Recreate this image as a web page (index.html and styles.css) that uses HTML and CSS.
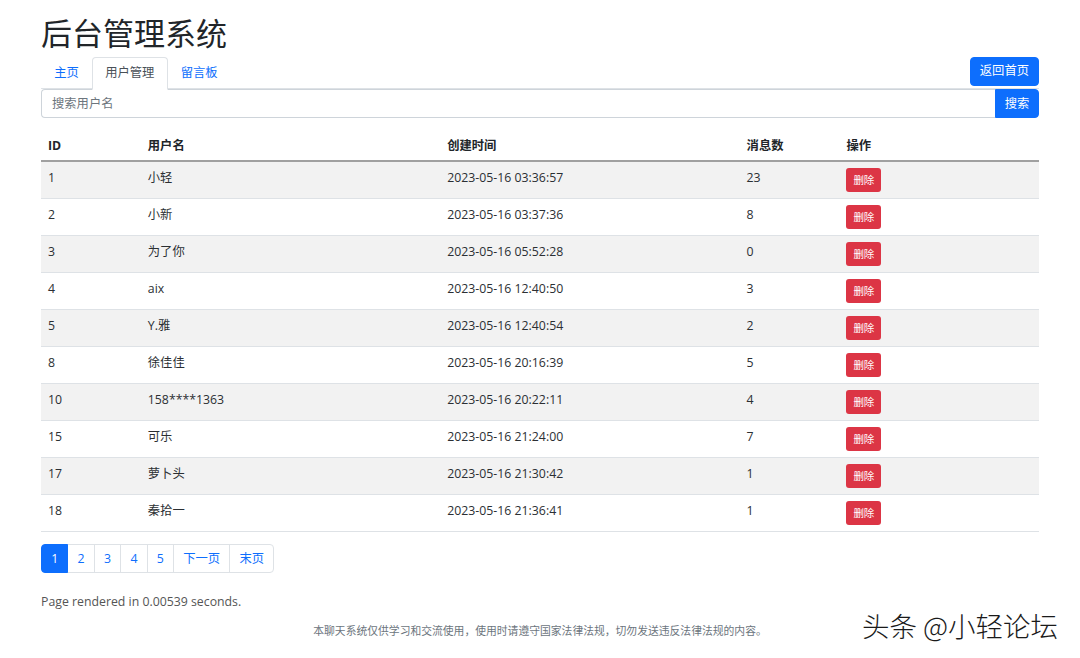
FILE: index.html
```html
<!DOCTYPE html>
<html lang="zh-CN">
<head>
<meta charset="utf-8">
<title>后台管理系统</title>
<link rel="stylesheet" href="styles.css">
</head>
<body>
<div class="container">
  <h1 class="title">后台管理系统</h1>
  <div class="nav-row">
    <ul class="nav-tabs">
      <li><a class="tab" href="#">主页</a></li>
      <li><a class="tab active" href="#">用户管理</a></li>
      <li><a class="tab" href="#">留言板</a></li>
    </ul>
    <a class="btn btn-home" href="#">返回首页</a>
  </div>
  <form class="search">
    <input class="search-input" type="text" placeholder="搜索用户名">
    <button class="btn btn-search" type="button">搜索</button>
  </form>
  <table class="table">
    <colgroup>
      <col class="c-id"><col class="c-name"><col class="c-time"><col class="c-count"><col class="c-op">
    </colgroup>
    <thead>
      <tr><th>ID</th><th>用户名</th><th>创建时间</th><th>消息数</th><th>操作</th></tr>
    </thead>
    <tbody>
      <tr><td>1</td><td>小轻</td><td>2023-05-16 03:36:57</td><td>23</td><td><button class="btn-del">删除</button></td></tr>
      <tr><td>2</td><td>小新</td><td>2023-05-16 03:37:36</td><td>8</td><td><button class="btn-del">删除</button></td></tr>
      <tr><td>3</td><td>为了你</td><td>2023-05-16 05:52:28</td><td>0</td><td><button class="btn-del">删除</button></td></tr>
      <tr><td>4</td><td>aix</td><td>2023-05-16 12:40:50</td><td>3</td><td><button class="btn-del">删除</button></td></tr>
      <tr><td>5</td><td>Y.雅</td><td>2023-05-16 12:40:54</td><td>2</td><td><button class="btn-del">删除</button></td></tr>
      <tr><td>8</td><td>徐佳佳</td><td>2023-05-16 20:16:39</td><td>5</td><td><button class="btn-del">删除</button></td></tr>
      <tr><td>10</td><td>158****1363</td><td>2023-05-16 20:22:11</td><td>4</td><td><button class="btn-del">删除</button></td></tr>
      <tr><td>15</td><td>可乐</td><td>2023-05-16 21:24:00</td><td>7</td><td><button class="btn-del">删除</button></td></tr>
      <tr><td>17</td><td>萝卜头</td><td>2023-05-16 21:30:42</td><td>1</td><td><button class="btn-del">删除</button></td></tr>
      <tr><td>18</td><td>秦拾一</td><td>2023-05-16 21:36:41</td><td>1</td><td><button class="btn-del">删除</button></td></tr>
    </tbody>
  </table>
  <ul class="pagination">
    <li><a class="page-link active" href="#">1</a></li>
    <li><a class="page-link" href="#">2</a></li>
    <li><a class="page-link" href="#">3</a></li>
    <li><a class="page-link" href="#">4</a></li>
    <li><a class="page-link" href="#">5</a></li>
    <li><a class="page-link" href="#">下一页</a></li>
    <li><a class="page-link" href="#">末页</a></li>
  </ul>
  <p class="rendered">Page rendered in 0.00539 seconds.</p>
  <p class="notice">本聊天系统仅供学习和交流使用，使用时请遵守国家法律法规，切勿发送违反法律法规的内容。</p>
</div>
<div class="watermark">头条 @小轻论坛</div>
</body>
</html>
```
FILE: styles.css
```css
* { box-sizing: border-box; }
html, body { margin: 0; padding: 0; }
body {
  font-family: "Open Sans", "Noto Sans CJK SC", sans-serif;
  font-size: 12.3px;
  line-height: 20px;
  color: #2b2f33;
  background: #fff;
  position: relative;
  height: 658px;
  overflow: hidden;
}
.container { width: 998px; margin: 0 auto; }
.title {
  margin: 14px 0 5px;
  font-size: 31px;
  line-height: 38px;
  font-weight: 400;
  color: #212529;
}
.nav-row { display: flex; justify-content: space-between; align-items: flex-start; border-bottom: 1px solid #dee2e6; height: 32px; }
.nav-tabs { list-style: none; margin: 0; padding: 0; display: flex; }
.tab {
  display: block;
  padding: 5px 12.2px 6px;
  border: 1px solid transparent;
  border-radius: 4px 4px 0 0;
  color: #0d6efd;
  text-decoration: none;
  line-height: 20px;
}
.tab.active { color: #495057; border-color: #dee2e6 #dee2e6 #fff; background: #fff; position: relative; z-index: 1; }
.btn {
  display: inline-block;
  background: #0d6efd;
  color: #fff;
  border: 1px solid #0d6efd;
  font-family: inherit;
  font-size: 12.3px;
  line-height: 20px;
  text-decoration: none;
  cursor: pointer;
  white-space: nowrap;
}
.btn-home { padding: 3px 9px 4px; border-radius: 4px; height: 29px; }
.search { display: flex; margin: 0 0 10px; height: 29px; }
.search-input {
  flex: 1;
  min-width: 0;
  border: 1px solid #ced4da;
  border-right: 0;
  border-radius: 4px 0 0 4px;
  padding: 0 10px;
  font-family: inherit;
  font-size: 12.3px;
  color: #212529;
  outline: none;
}
.search-input::placeholder { color: #6c757d; }
.btn-search { border-radius: 0 4px 4px 0; padding: 0; width: 44px; flex: none; }
.table { width: 100%; border-collapse: collapse; table-layout: fixed; }
.c-id { width: 10%; } .c-name { width: 30%; } .c-time { width: 30%; } .c-count { width: 10%; } .c-op { width: 20%; }
.table th, .table td { text-align: left; padding: 6px 7px; vertical-align: top; line-height: 20px; }
.table th { font-weight: 700; border-bottom: 2px solid #a0a0a0; color: #212529; padding-top: 8px; padding-bottom: 4px; }
.table td { border-bottom: 1px solid #dee2e6; height: 36px; }
.table tbody tr:nth-child(odd) td { background: #f2f2f2; }
.btn-del {
  display: block;
  background: #dc3545;
  color: #fff;
  border: 0;
  border-radius: 3px;
  font-family: inherit;
  font-size: 10.5px;
  width: 35px;
  height: 24px;
  padding: 0;
  line-height: 24px;
}
.pagination { list-style: none; margin: 12px 0 0; padding: 0; display: flex; }
.page-link {
  display: block;
  height: 29px;
  padding: 4px 9.2px 3px;
  border: 1px solid #dee2e6;
  margin-left: -1px;
  color: #0d6efd;
  text-decoration: none;
  line-height: 20px;
}
.pagination li:first-child .page-link { margin-left: 0; border-radius: 4px 0 0 4px; }
.pagination li:last-child .page-link { border-radius: 0 4px 4px 0; }
.page-link.active { background: #0d6efd; border-color: #0d6efd; color: #fff; position: relative; }
.rendered { margin: 19px 0 0; color: #555; font-size: 12.3px; }
.notice { margin: 9px 0 0; text-align: center; font-size: 10.8px; color: #6c757d; }
.watermark {
  position: absolute;
  left: 862px;
  top: 607px;
  font-family: "Noto Sans CJK SC", sans-serif;
  font-size: 27.5px;
  font-weight: 300;
  line-height: 36px;
  color: #1a1a1a;
  text-shadow: 1px 1px 0 #fff, -1px -1px 0 #fff, 1px -1px 0 #fff, -1px 1px 0 #fff;
}
```
